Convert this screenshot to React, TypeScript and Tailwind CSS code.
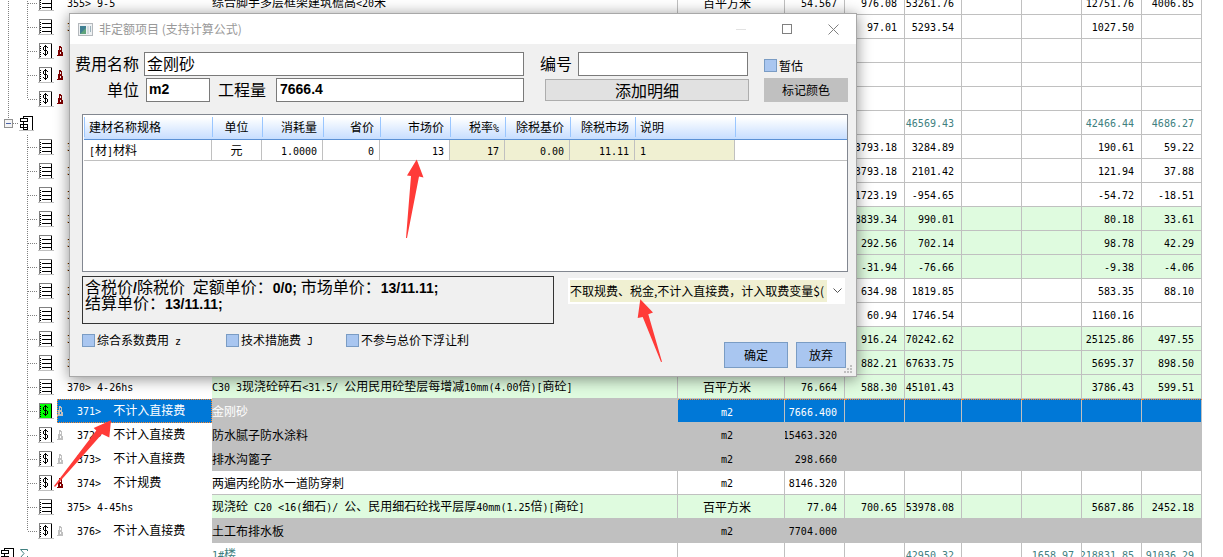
import { clsx } from "clsx";

type Kind = "list" | "fee" | "group" | "total";

interface Row {
  kind: Kind;
  code?: string;
  name?: string;
  unit?: string;
  values: string[];
  tone?: "green" | "grey" | "selected";
  lock?: "red" | "grey";
}

// values: quantity, unit price, total, -, extra, labour, machine
const rows: Row[] = [
  { kind: "list", code: "355> 9-5", name: "综合脚手多层框架建筑檐高<20米", unit: "百平方米", values: ["54.567", "976.08", "53261.76", "", "", "12751.76", "4006.85"] },
  { kind: "list", code: "356>", values: ["", "97.01", "5293.54", "", "", "1027.50", ""] },
  { kind: "fee", lock: "red", values: ["", "", "", "", "", "", ""] },
  { kind: "fee", lock: "red", values: ["", "", "", "", "", "", ""] },
  { kind: "fee", lock: "red", values: ["", "", "", "", "", "", ""] },
  { kind: "group", values: ["", "", "46569.43", "", "", "42466.44", "4686.27"] },
  { kind: "list", code: "360>", values: ["", "3793.18", "3284.89", "", "", "190.61", "59.22"] },
  { kind: "list", code: "361>", values: ["", "3793.18", "2101.42", "", "", "121.94", "37.88"] },
  { kind: "list", code: "362>", values: ["", "1723.19", "-954.65", "", "", "-54.72", "-18.51"] },
  { kind: "list", code: "363>", tone: "green", values: ["", "8839.34", "990.01", "", "", "80.18", "33.61"] },
  { kind: "list", code: "364>", tone: "green", values: ["", "292.56", "702.14", "", "", "98.78", "42.29"] },
  { kind: "list", code: "365>", tone: "green", values: ["", "-31.94", "-76.66", "", "", "-9.38", "-4.06"] },
  { kind: "list", code: "366>", values: ["", "634.98", "1819.85", "", "", "583.35", "88.10"] },
  { kind: "list", code: "367>", values: ["", "60.94", "1746.54", "", "", "1160.16", ""] },
  { kind: "list", code: "368>", tone: "green", values: ["", "916.24", "70242.62", "", "", "25125.86", "497.55"] },
  { kind: "list", code: "369>", tone: "green", values: ["", "882.21", "67633.75", "", "", "5695.37", "898.50"] },
  { kind: "list", code: "370> 4-26hs", name: "C30 3现浇砼碎石<31.5/ 公用民用砼垫层每增减10mm(4.00倍)[商砼]", unit: "百平方米", tone: "green", values: ["76.664", "588.30", "45101.43", "", "", "3786.43", "599.51"] },
  { kind: "fee", code: "371>  不计入直接费", name: "金刚砂", unit: "m2", tone: "selected", lock: "grey", values: ["7666.400", "", "", "", "", "", ""] },
  { kind: "fee", code: "372>  不计入直接费", name: "防水腻子防水涂料", unit: "m2", tone: "grey", lock: "grey", values: ["15463.320", "", "", "", "", "", ""] },
  { kind: "fee", code: "373>  不计入直接费", name: "排水沟篦子", unit: "m2", tone: "grey", lock: "grey", values: ["298.660", "", "", "", "", "", ""] },
  { kind: "fee", code: "374>  不计规费", name: "两遍丙纶防水一道防穿刺", unit: "m2", lock: "red", values: ["8146.320", "", "", "", "", "", ""] },
  { kind: "list", code: "375> 4-45hs", name: "现浇砼 C20 <16(细石)/ 公、民用细石砼找平层厚40mm(1.25倍)[商砼]", unit: "百平方米", tone: "green", values: ["77.04", "700.65", "53978.08", "", "", "5687.86", "2452.18"] },
  { kind: "fee", code: "376>  不计入直接费", name: "土工布排水板", unit: "m2", tone: "grey", lock: "grey", values: ["7704.000", "", "", "", "", "", ""] },
  { kind: "total", name: "1#楼", values: ["", "", "42950.32", "", "1658.97", "218831.85", "91036.29"] },
];

const LAST_CHILD = 22;

// Latin runs use a half-width mono face next to full-width Chinese
function Mixed({ children }: { children: string }) {
  return (
    <span className="whitespace-pre">
      {children.split(/([\x20-\x7e]+)/).map((part, i) =>
        i % 2 ? (
          <span key={i} className="font-['DejaVu_Sans_Mono',monospace] text-[10px]">
            {part}
          </span>
        ) : (
          part
        ),
      )}
    </span>
  );
}

function GroupIcon({ x }: { x: number }) {
  return (
    <g transform={`translate(${x} 5)`} shapeRendering="crispEdges">
      <path d="M4.5 2V.5H13.5V14" fill="none" stroke="#000" />
      <path d="M1 2.5H8M1 5.5H8M1 8.5H8M1 11.5H8M4 13.5H8" fill="none" stroke="#000" />
      <path d="M1.5 2V6M8.5 2V6M1.5 8V12M8.5 8V14M4.5 5V14" fill="none" stroke="#000" />
      <path d="M0 14.5H15" stroke="#c0c0c0" />
    </g>
  );
}

function TreeGuides({ row, index }: { row: Row; index: number }) {
  const selected = row.tone === "selected";
  const child = row.kind === "list" || row.kind === "fee";
  const last = index === 4 || index === LAST_CHILD;
  return (
    <svg width="57" height="24" viewBox="0 0 57 24" className="shrink-0">
      <g stroke="#808080" strokeDasharray="1 1" shapeRendering="crispEdges">
        {index < 5 && <path d="M8.5 0V24" />}
        {row.kind === "group" && <path d="M8.5 0V8M13 12.5H19" />}
        {child && <path d={last ? "M27.5 0V12" : "M27.5 0V24"} />}
        {child && <path d="M28 12.5H38" />}
      </g>
      {row.kind === "group" && (
        <g shapeRendering="crispEdges">
          <rect x="4.5" y="8.5" width="8" height="8" rx="1" fill="#f4f4f4" stroke="#919191" />
          <path d="M6 12.5H11" stroke="#4b63a7" />
          <GroupIcon x={19} />
        </g>
      )}
      {row.kind === "total" && (
        <g>
          <GroupIcon x={0} />
          <path d="M27.5 8V6.5H20.5L24 10.5L20.5 14.5H27.5V13" fill="none" stroke="#408080" />
        </g>
      )}
      {child && (
        <g shapeRendering="crispEdges">
          <rect x="39" y="4" width="13" height="15" fill={selected ? "#00ff00" : "#fff"} />
          <path d="M39.5 19V4.5H52" fill="none" stroke="#808080" />
          <path d="M51.5 5V19" stroke="#000" />
          <path d="M40.5 7V19" stroke="#000" strokeDasharray="1 1" />
          <path d="M38 19.5H54" stroke="#c0c0c0" />
          {row.kind === "list" ? (
            <path d="M42 8.5H51M42 12.5H51M42 16.5H51" stroke="#000" />
          ) : (
            <path d="M44 7h3v1h-3zM47 8h1v1h-1zM43 8h1v3h-1zM44 11h3v1h-3zM47 12h1v3h-1zM43 14h1v1h-1zM44 15h3v1h-3zM45 6h1v11h-1z" />
          )}
        </g>
      )}
    </svg>
  );
}

function Lock({ tone }: { tone: "red" | "grey" }) {
  return (
    <svg width="7" height="10" viewBox="0 0 7 10" className={clsx("mr-[13px] shrink-0", tone === "red" ? "text-[#800000]" : "text-[#c0c0c0]")}>
      <path d="M2 0h2v1h1v5h1v4H0V9h1V4h1zM3 2v2h1V2zM3 6v2h1V6z" fill="currentColor" fillRule="evenodd" />
    </svg>
  );
}

function GridCell({ row, text, className }: { row: Row; text: string; className: string }) {
  const selected = row.tone === "selected";
  return (
    <td
      className={clsx(
        "h-6 border-b border-[#c0c0c0] p-0",
        row.tone === "green" && "bg-[#dffbdf]",
        row.tone === "grey" && "bg-[#c0c0c0]",
        selected && "bg-[#0078d7] text-white",
        (row.kind === "group" || row.kind === "total") && "text-[#408080]",
      )}
    >
      <div className={clsx(selected && "border-t border-dotted border-[#ff8728]")}>
        <div className={clsx("flex items-center overflow-hidden border-r border-[#c0c0c0]", selected ? "h-[22px]" : "h-[23px]", className)}>
          <Mixed>{text}</Mixed>
        </div>
      </div>
    </td>
  );
}

function EstimateTable() {
  return (
    <table className="-mt-[9px] w-full table-fixed border-separate border-spacing-0">
      <colgroup>
        <col className="w-[212px]" />
        <col />
        <col className="w-[107px]" />
        <col className="w-[60px]" />
        <col className="w-[60px]" />
        <col className="w-[57px]" />
        <col className="w-[60px]" />
        <col className="w-[60px]" />
        <col className="w-[60px]" />
        <col className="w-[60px]" />
      </colgroup>
      <tbody>
        {rows.map((row, i) => {
          const selected = row.tone === "selected";
          return (
            <tr key={i}>
              <td className="h-6 p-0">
                <div className="flex h-6 items-center">
                  <TreeGuides row={row} index={i} />
                  <div
                    className={clsx(
                      "flex h-6 min-w-0 flex-1 items-center overflow-hidden pb-px",
                      selected && "bg-[#0078d7] text-white outline-1 -outline-offset-1 outline-[#ff8728] outline-dotted",
                    )}
                  >
                    {row.lock && <Lock tone={row.lock} />}
                    <div className={row.lock ? "" : "pl-[10px]"}>
                      <Mixed>{row.code ?? ""}</Mixed>
                    </div>
                  </div>
                </div>
              </td>
              {selected ? (
                <td className="h-6 bg-[#c0c0c0] p-0 text-white">
                  <Mixed>{row.name ?? ""}</Mixed>
                </td>
              ) : (
                <GridCell row={row} text={row.name ?? ""} className="" />
              )}
              <GridCell row={row} text={row.unit ?? ""} className="justify-center pr-2" />
              {row.values.map((value, j) => (
                <GridCell key={j} row={row} text={value} className="justify-end pr-[7px]" />
              ))}
            </tr>
          );
        })}
      </tbody>
    </table>
  );
}

const materialColumns = [
  { title: "建材名称规格", value: "[材]材料", width: "w-[128px]", align: "text-left" },
  { title: "单位", value: "元", width: "w-[50px]", align: "text-center" },
  { title: "消耗量", value: "1.0000", width: "w-[61px]", align: "text-right" },
  { title: "省价", value: "0", width: "w-[57px]", align: "text-right" },
  { title: "市场价", value: "13", width: "w-[70px]", align: "text-right" },
  { title: "税率%", value: "17", width: "w-[55px]", align: "text-right", shaded: true },
  { title: "除税基价", value: "0.00", width: "w-[65px]", align: "text-right", shaded: true },
  { title: "除税市场", value: "11.11", width: "w-[65px]", align: "text-right", shaded: true },
  { title: "说明", value: "1", width: "w-[100px]", align: "text-left", shaded: true },
];

function MaterialTable() {
  return (
    <div className="mt-3 mr-2 ml-3 h-[158px] border border-[#828790] bg-white pl-px">
      <table className="w-full table-fixed border-separate border-spacing-0">
        <colgroup>
          {materialColumns.map((col) => (
            <col key={col.title} className={col.width} />
          ))}
          <col />
        </colgroup>
        <thead>
          <tr className="bg-linear-to-b from-white from-10% to-[#c4dcff]">
            {materialColumns.map((col) => (
              <th key={col.title} className={clsx("h-[25px] border-b border-[#5b91d5] p-0 font-normal", col.align)}>
                <div className="h-5 border-l border-[#99c6ff] pr-[6px] pl-1 leading-5">
                  <Mixed>{col.title}</Mixed>
                </div>
              </th>
            ))}
            <th className="h-[25px] border-b border-[#5b91d5] p-0">
              <div className="h-5 border-l border-[#99c6ff]" />
            </th>
          </tr>
        </thead>
        <tbody>
          <tr>
            {materialColumns.map((col) => (
              <td key={col.title} className={clsx("border-r border-b border-[#c0c0c0] p-0", col.align, col.shaded && "bg-[#f0f0d2]")}>
                <div className="h-5 pr-[5px] pl-[5px] leading-5">
                  <Mixed>{col.value}</Mixed>
                </div>
              </td>
            ))}
            <td className="border-b border-[#c0c0c0] p-0" />
          </tr>
        </tbody>
      </table>
    </div>
  );
}

function Tick({ label, hotkey, className }: { label: string; hotkey?: string; className?: string }) {
  return (
    <label className={clsx("flex items-center whitespace-pre", className)}>
      <input type="checkbox" className="mr-[2px] size-[13px] appearance-none border border-[#7a9cc4] bg-[#a9c6f0]" />
      <Mixed>{hotkey ? `${label} ${hotkey}` : label}</Mixed>
    </label>
  );
}

const box = "h-6 border border-[#7a7a7a] bg-white pb-0.5 outline-none";
const boldValue = "font-['Liberation_Sans',sans-serif] text-[14px] font-bold";
const blueButton = "h-[26px] border border-[#7a9cc4] bg-[#a9c6f0]";

function FeeDialog() {
  return (
    <section className="absolute top-[13px] left-[69px] w-[788px] border border-[#a8a8a8] bg-[#f0f0f0] shadow-[0_2px_14px_rgba(0,0,0,0.45)]">
      <header className="flex h-[30px] items-center bg-white pl-2 text-[#999]">
        <svg width="15" height="13" viewBox="0 0 15 13" className="mr-[6px]">
          <rect x=".5" y=".5" width="14" height="12" fill="#eef1f3" stroke="#b4b8bc" />
          <rect x="2" y="3" width="6" height="8" fill="#3f7f92" />
          <path d="M2 11L8 5V11Z" fill="#5fa37a" />
          <rect x="9" y="3" width="2" height="8" fill="#d2dade" />
          <rect x="12" y="3" width="1" height="6" fill="#9fb4bd" />
        </svg>
        <h1>非定额项目 (支持计算公式)</h1>
        <div className="ml-auto flex">
          <button type="button" aria-label="最小化" className="flex h-[30px] w-[46px] items-center justify-center">
            <svg width="10" height="10" stroke="#e2e2e2"><path d="M0 5.5H10" /></svg>
          </button>
          <button type="button" aria-label="最大化" className="flex h-[30px] w-[46px] items-center justify-center">
            <svg width="10" height="10" fill="none" stroke="#808080"><rect x=".5" y=".5" width="9" height="9" /></svg>
          </button>
          <button type="button" aria-label="关闭" className="flex h-[30px] w-[46px] items-center justify-center">
            <svg width="11" height="11" stroke="#808080"><path d="M.5 .5L10.5 10.5M10.5 .5L.5 10.5" /></svg>
          </button>
        </div>
      </header>

      <div className="flex flex-col gap-0.5 pt-2 pl-[5px] text-base leading-[22px]">
        <div className="flex h-6">
          <label htmlFor="fee-name">费用名称</label>
          <input id="fee-name" defaultValue="金刚砂" className={clsx(box, "ml-[5px] w-[380px] pl-0.5")} />
          <label htmlFor="fee-no" className="ml-4">编号</label>
          <input id="fee-no" className={clsx(box, "ml-[6px] w-[170px] pl-0.5")} />
          <Tick label="暂估" className="ml-4 pt-[3px] text-xs" />
        </div>
        <div className="flex h-6">
          <label htmlFor="fee-unit" className="w-16 text-right">单位</label>
          <input id="fee-unit" defaultValue="m2" className={clsx(box, boldValue, "ml-[7px] w-16 pl-0.5")} />
          <label htmlFor="fee-qty" className="ml-2">工程量</label>
          <input id="fee-qty" defaultValue="7666.4" className={clsx(box, boldValue, "ml-[10px] w-[248px] pl-[3px]")} />
          <button type="button" className="my-px ml-[21px] w-[204px] border border-[#adadad] bg-[#e1e1e1] leading-5">添加明细</button>
          <button type="button" className="ml-[15px] w-[84px] bg-[#c0c0c0] text-xs">标记颜色</button>
        </div>
      </div>

      <MaterialTable />

      <div className="mt-1 flex justify-between pr-2 pb-2 pl-3">
        <div>
          <div className="h-12 w-[472px] border border-[#333] px-0.5 pt-px text-base leading-4 whitespace-pre">
            <p className="h-4">
              含税价<b className={boldValue}>/</b>除税价<b className={boldValue}>{"  "}</b>定额单价：<b className={boldValue}>0/0; </b>市场单价：<b className={boldValue}>13/11.11;</b>
            </p>
            <p className="h-4">
              结算单价：<b className={boldValue}>13/11.11;</b>
            </p>
          </div>
          <div className="mt-2 flex">
            <Tick label="综合系数费用" hotkey="z" className="w-36" />
            <Tick label="技术措施费" hotkey="J" className="w-[120px]" />
            <Tick label="不参与总价下浮让利" />
          </div>
        </div>
        <div className="flex w-[280px] flex-col gap-[38px] pt-0.5">
          <div className="relative mr-[3px] bg-white p-0.5">
            <select aria-label="取费方式" className="block h-[22px] w-[257px] appearance-none bg-[#f0f0d2] text-xs outline-none">
              <option>不取规费、税金,不计入直接费，计入取费变量$(</option>
            </select>
            <svg width="9" height="6" viewBox="0 0 9 6" className="pointer-events-none absolute top-[10px] right-[3px]" fill="none" stroke="#555">
              <path d="M.5 .5L4.5 4.5L8.5 .5" />
            </svg>
          </div>
          <div className="flex justify-end gap-2 pr-[2px]">
            <button type="button" className={clsx(blueButton, "w-16")}>确定</button>
            <button type="button" className={clsx(blueButton, "w-[50px]")}>放弃</button>
          </div>
        </div>
      </div>

      <svg width="8" height="8" viewBox="0 0 8 8" fill="#bfbfbf" className="absolute right-1 bottom-[3px]">
        <path d="M6 0h2v2h-2zM3 3h2v2h-2zM6 3h2v2h-2zM0 6h2v2h-2zM3 6h2v2h-2zM6 6h2v2h-2z" />
      </svg>
    </section>
  );
}

function Arrows() {
  return (
    <svg width="700" height="520" viewBox="0 0 700 520" fill="#ff3b38" className="pointer-events-none absolute top-0 left-0">
      <path d="M416.7 159.5L423.5 177.5L419 176.5L407 238H406L411 176L407 175.5Z" />
      <path d="M640.3 299.3L653 312.5L648.3 314.3L662 361.7L661 362L642.7 317L637.7 318Z" />
      <path d="M111 420.3L109.3 437.5L102 434L55 487L54 486L96.3 430.5L93.7 428Z" />
    </svg>
  );
}

export default function App() {
  return (
    <main className="relative h-screen overflow-hidden bg-white pr-[21px] font-['Noto_Sans_CJK_SC',sans-serif] text-xs text-black">
      <EstimateTable />
      <FeeDialog />
      <Arrows />
    </main>
  );
}
